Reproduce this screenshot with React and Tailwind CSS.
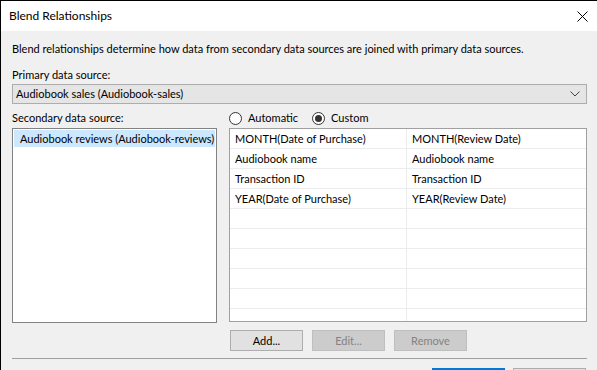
import React from "react";

const rows = [
  ["MONTH(Date of Purchase)", "MONTH(Review Date)"],
  ["Audiobook name", "Audiobook name"],
  ["Transaction ID", "Transaction ID"],
  ["YEAR(Date of Purchase)", "YEAR(Review Date)"],
  ["", ""],
  ["", ""],
  ["", ""],
  ["", ""],
  ["", ""],
  ["", ""],
];

const Radio = ({ checked, label }) => (
  <div className="flex items-center">
    <span className="w-[13px] h-[13px] rounded-full border border-[#333] bg-white flex items-center justify-center">
      {checked && <span className="w-[7px] h-[7px] rounded-full bg-[#333]" />}
    </span>
    <span className="ml-[6px]">{label}</span>
  </div>
);

const Button = ({ children, disabled, className = "" }) => (
  <div
    className={`h-[21px] w-[73px] flex items-center justify-center border ${
      disabled
        ? "bg-[#cccccc] border-[#bfbfbf] text-[#838383]"
        : "bg-[#e1e1e1] border-[#adadad] text-black"
    } ${className}`}
  >
    {children}
  </div>
);

export default function App() {
  return (
    <div
      className="w-[597px] h-[370px] overflow-hidden whitespace-nowrap bg-[#f0f0f0] border-t border-l border-black text-[11px] leading-[16px] text-black"
      style={{ fontFamily: 'Lato, "Noto Sans", sans-serif' }}
    >
      {/* title bar */}
      <div className="h-[30px] bg-white flex items-center justify-between pl-[8px] pr-[9px] text-[12px]">
        <span>Blend Relationships</span>
        <svg width="11" height="11" viewBox="0 0 11 11" className="mt-[1px]">
          <path d="M0.5 0.5 L10.5 10.5 M10.5 0.5 L0.5 10.5" stroke="#000" strokeWidth="1" />
        </svg>
      </div>

      <div className="pl-[11px] pr-[10px] pt-[10px]">
        <div>Blend relationships determine how data from secondary data sources are joined with primary data sources.</div>

        <div className="mt-[10px]">Primary data source:</div>
        <div className="mt-[1px] h-[20px] bg-[#e5e5e5] border border-[#adadad] flex items-center justify-between pl-[3px] pr-[6px]">
          <span>Audiobook sales (Audiobook-sales)</span>
          <svg width="10" height="6" viewBox="0 0 10 6">
            <path d="M0.5 0.5 L5 5 L9.5 0.5" stroke="#444" fill="none" strokeWidth="1" />
          </svg>
        </div>

        <div className="mt-[6px] flex gap-[12px]">
          {/* left */}
          <div className="w-[205px] flex flex-col">
            <div className="h-[18px]">Secondary data source:</div>
            <div className="h-[195px] bg-white border border-[#828282] p-[1px]">
              <div className="h-[17px] bg-[#cce8ff] pl-[6px] flex items-center">
                Audiobook reviews (Audiobook-reviews)
              </div>
            </div>
          </div>

          {/* right */}
          <div className="flex-1 flex flex-col">
            <div className="h-[18px] flex items-start gap-[14px]">
              <Radio label="Automatic" />
              <Radio checked label="Custom" />
            </div>
            <div className="h-[194px] bg-white border border-[#a0a0a0] overflow-hidden">
              {rows.map((r, i) => (
                <div key={i} className="flex h-[20px] border-b border-[#ececec]">
                  <div className="w-[177px] border-r border-[#ececec] pl-[5px] flex items-center">{r[0]}</div>
                  <div className="flex-1 pl-[5px] flex items-center">{r[1]}</div>
                </div>
              ))}
            </div>
            <div className="mt-[8px] flex gap-[9px] pl-[1px]">
              <Button>Add...</Button>
              <Button disabled>Edit...</Button>
              <Button disabled>Remove</Button>
            </div>
          </div>
        </div>

        <div className="mt-[7px] h-[1px] bg-[#a0a0a0]" />

        <div className="mt-[9px] flex justify-end gap-[8px] pr-[1px]">
          <div className="w-[73px] h-[21px] bg-[#e1e1e1] border-2 border-[#0078d7]" />
          <div className="w-[73px] h-[21px] bg-[#e1e1e1] border border-[#adadad]" />
        </div>
      </div>
    </div>
  );
}
